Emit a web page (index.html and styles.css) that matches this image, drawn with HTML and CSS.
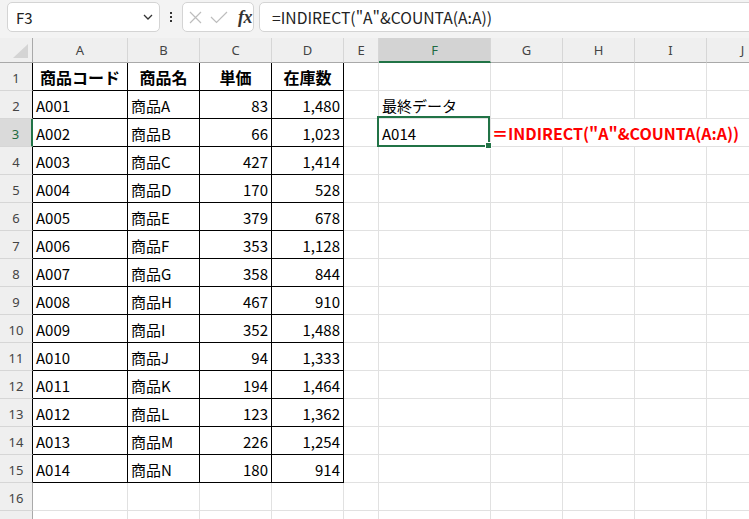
FILE: index.html
```html
<!DOCTYPE html>
<html lang="ja">
<head>
<meta charset="utf-8">
<title>Sheet</title>
<link rel="stylesheet" href="styles.css">
</head>
<body>
<div class="fbar">
  <div class="namebox">
    <span>F3</span>
    <svg class="chev" width="10" height="6" viewBox="0 0 10 6"><path d="M1 1 L5 5 L9 1" fill="none" stroke="#333" stroke-width="1.3"/></svg>
  </div>
  <div class="sep"><i></i><i></i><i></i></div>
  <div class="fxbox">
    <svg width="13" height="13" viewBox="0 0 13 13"><path d="M1 1 L12 12 M12 1 L1 12" stroke="#bdbdbd" stroke-width="1.2" fill="none"/></svg>
    <svg width="18" height="13" viewBox="0 0 18 13"><path d="M1 6 L6.5 11.5 L17 1" stroke="#bdbdbd" stroke-width="1.2" fill="none"/></svg>
    <span class="fx">fx</span>
  </div>
  <div class="input">=INDIRECT("A"&amp;COUNTA(A:A))</div>
</div>

<div class="sheet">
  <div class="h corner"><svg width="16" height="15" viewBox="0 0 16 15"><polygon points="15,0 15,14 0,14" fill="#d4d4d4"/></svg></div>
  <div class="c h">A</div><div class="c h">B</div><div class="c h">C</div><div class="c h">D</div><div class="c h">E</div>
  <div class="c h hsel">F</div><div class="c h">G</div><div class="c h">H</div><div class="c h">I</div><div class="c h">J</div>

  <div class="rh tb">1</div>
  <div class="c t th">商品コード</div><div class="c t th">商品名</div><div class="c t th">単価</div><div class="c t th">在庫数</div>
  <div class="c"></div><div class="c"></div><div class="c"></div><div class="c"></div><div class="c"></div><div class="c"></div>

  <div class="rh tb">2</div>
  <div class="c t">A001</div><div class="c t">商品A</div><div class="c t n">83</div><div class="c t n">1,480</div>
  <div class="c"></div><div class="c">最終データ</div><div class="c"></div><div class="c"></div><div class="c"></div><div class="c"></div>

  <div class="rh rsel">3</div>
  <div class="c t">A002</div><div class="c t">商品B</div><div class="c t n">66</div><div class="c t n">1,023</div>
  <div class="c"></div><div class="c sel">A014<span class="selbox"><span class="handle"></span></span></div>
  <div class="c span4 red">＝INDIRECT("A"&amp;COUNTA(A:A))</div>

  <div class="rh tb">4</div>
  <div class="c t">A003</div><div class="c t">商品C</div><div class="c t n">427</div><div class="c t n">1,414</div>
  <div class="c"></div><div class="c"></div><div class="c"></div><div class="c"></div><div class="c"></div><div class="c"></div>

  <div class="rh tb">5</div>
  <div class="c t">A004</div><div class="c t">商品D</div><div class="c t n">170</div><div class="c t n">528</div>
  <div class="c"></div><div class="c"></div><div class="c"></div><div class="c"></div><div class="c"></div><div class="c"></div>

  <div class="rh tb">6</div>
  <div class="c t">A005</div><div class="c t">商品E</div><div class="c t n">379</div><div class="c t n">678</div>
  <div class="c"></div><div class="c"></div><div class="c"></div><div class="c"></div><div class="c"></div><div class="c"></div>

  <div class="rh tb">7</div>
  <div class="c t">A006</div><div class="c t">商品F</div><div class="c t n">353</div><div class="c t n">1,128</div>
  <div class="c"></div><div class="c"></div><div class="c"></div><div class="c"></div><div class="c"></div><div class="c"></div>

  <div class="rh tb">8</div>
  <div class="c t">A007</div><div class="c t">商品G</div><div class="c t n">358</div><div class="c t n">844</div>
  <div class="c"></div><div class="c"></div><div class="c"></div><div class="c"></div><div class="c"></div><div class="c"></div>

  <div class="rh tb">9</div>
  <div class="c t">A008</div><div class="c t">商品H</div><div class="c t n">467</div><div class="c t n">910</div>
  <div class="c"></div><div class="c"></div><div class="c"></div><div class="c"></div><div class="c"></div><div class="c"></div>

  <div class="rh tb">10</div>
  <div class="c t">A009</div><div class="c t">商品I</div><div class="c t n">352</div><div class="c t n">1,488</div>
  <div class="c"></div><div class="c"></div><div class="c"></div><div class="c"></div><div class="c"></div><div class="c"></div>

  <div class="rh tb">11</div>
  <div class="c t">A010</div><div class="c t">商品J</div><div class="c t n">94</div><div class="c t n">1,333</div>
  <div class="c"></div><div class="c"></div><div class="c"></div><div class="c"></div><div class="c"></div><div class="c"></div>

  <div class="rh tb">12</div>
  <div class="c t">A011</div><div class="c t">商品K</div><div class="c t n">194</div><div class="c t n">1,464</div>
  <div class="c"></div><div class="c"></div><div class="c"></div><div class="c"></div><div class="c"></div><div class="c"></div>

  <div class="rh tb">13</div>
  <div class="c t">A012</div><div class="c t">商品L</div><div class="c t n">123</div><div class="c t n">1,362</div>
  <div class="c"></div><div class="c"></div><div class="c"></div><div class="c"></div><div class="c"></div><div class="c"></div>

  <div class="rh tb">14</div>
  <div class="c t">A013</div><div class="c t">商品M</div><div class="c t n">226</div><div class="c t n">1,254</div>
  <div class="c"></div><div class="c"></div><div class="c"></div><div class="c"></div><div class="c"></div><div class="c"></div>

  <div class="rh tb">15</div>
  <div class="c t">A014</div><div class="c t">商品N</div><div class="c t n">180</div><div class="c t n">914</div>
  <div class="c"></div><div class="c"></div><div class="c"></div><div class="c"></div><div class="c"></div><div class="c"></div>

  <div class="rh">16</div>
  <div class="c"></div><div class="c"></div><div class="c"></div><div class="c"></div>
  <div class="c"></div><div class="c"></div><div class="c"></div><div class="c"></div><div class="c"></div><div class="c"></div>

  <div class="rh"></div>
  <div class="c"></div><div class="c"></div><div class="c"></div><div class="c"></div>
  <div class="c"></div><div class="c"></div><div class="c"></div><div class="c"></div><div class="c"></div><div class="c"></div>
</div>
</body>
</html>
```

FILE: styles.css
```css
* { box-sizing: border-box; margin: 0; padding: 0; }
html, body { width: 749px; height: 519px; overflow: hidden; background: #fff; }
body { font-family: "Noto Sans CJK JP", "Noto Sans", sans-serif; color: #000; }

/* formula bar */
.fbar {
  height: 38px;
  background: #f3f3f3;
  display: flex;
  align-items: flex-start;
  padding: 2px 0 0 7px;
}
.namebox {
  width: 153px;
  height: 30px;
  background: #fff;
  border: 1px solid #d4d4d4;
  border-radius: 5px;
  display: flex;
  align-items: center;
  justify-content: space-between;
  padding: 0 6px 0 8px;
  font-size: 15px;
  color: #222;
}
.sep {
  width: 22px;
  height: 30px;
  display: flex;
  flex-direction: column;
  align-items: center;
  justify-content: center;
  gap: 2px;
}
.sep i { display: block; width: 2px; height: 2px; background: #333; }
.fxbox {
  width: 72px;
  height: 30px;
  background: #fff;
  border: 1px solid #d4d4d4;
  border-radius: 5px;
  display: flex;
  align-items: center;
  padding: 0 0 0 6px;
  gap: 8px;
}
.fx {
  font-family: "Liberation Serif", serif;
  font-style: italic;
  font-weight: bold;
  font-size: 18px;
  color: #333;
  margin-left: 2px;
  letter-spacing: -0.5px;
}
.input {
  flex: 1;
  margin-left: 5px;
  margin-right: -10px;
  height: 30px;
  background: #fff;
  border: 1px solid #d4d4d4;
  border-radius: 5px;
  display: flex;
  align-items: center;
  padding-left: 12px;
  font-size: 15.7px;
  color: #222;
}

/* sheet */
.sheet {
  display: grid;
  grid-template-columns: 33px 95px 72px 72px 72px 35px 112px 72px 72px 72px 72px;
  grid-template-rows: 25px;
  grid-auto-rows: 28px;
}
.c {
  border-right: 1px solid #e1e1e1;
  border-bottom: 1px solid #e1e1e1;
  display: flex;
  align-items: center;
  padding: 1px 3px 0 3px;
  font-size: 15px;
  white-space: nowrap;
}
.h {
  background: #efefef;
  border-right: 1px solid #d6d6d6;
  border-bottom: 1px solid #a9a9a9;
  justify-content: center;
  font-family: "Noto Sans", sans-serif;
  font-size: 13px;
  color: #444;
  padding: 0;
}
.corner {
  display: flex;
  align-items: flex-end;
  justify-content: flex-end;
  padding: 0 3px 3px 0;
  border-right: 1px solid #a9a9a9;
}
.hsel {
  background: #d3d3d3;
  color: #1e6b41;
  border-bottom: 2px solid #217346;
}
.rh {
  background: #efefef;
  border-right: 1px solid #a9a9a9;
  border-bottom: 1px solid #d6d6d6;
  display: flex;
  align-items: center;
  justify-content: center;
  font-family: "Noto Sans", sans-serif;
  font-size: 13px;
  color: #444;
  padding-top: 2px;
}
.rh.tb { border-right-color: #000; }
.rsel {
  background: #dadada;
  color: #1e6b41;
  border-right: 2px solid #217346;
}
.t { border-right-color: #000; border-bottom-color: #000; }
.th { font-weight: bold; justify-content: center; font-size: 16px; }
.n { justify-content: flex-end; }
.sel { position: relative; }
.selbox {
  position: absolute;
  top: -3px;
  left: -2px;
  right: 0;
  bottom: -1px;
  border: 2px solid #217346;
}
.handle {
  position: absolute;
  right: -4px;
  bottom: -4px;
  width: 7px;
  height: 7px;
  background: #217346;
  border: 1px solid #fff;
}
.span4 { grid-column: span 4; }
.red { color: #ff0000; font-weight: bold; font-size: 16px; padding-left: 1px; }
```
